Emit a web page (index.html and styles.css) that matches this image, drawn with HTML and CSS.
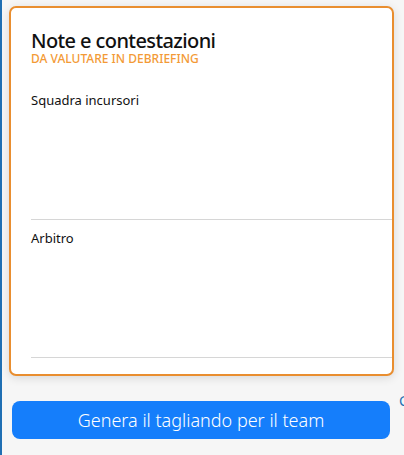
FILE: index.html
```html
<!DOCTYPE html>
<html lang="it">
<head>
    <meta charset="UTF-8">
    <meta name="viewport" content="width=device-width, initial-scale=1.0">
    <title>Note e contestazioni</title>
    <link rel="stylesheet" href="styles.css">
</head>
<body>
    <div class="page">
        <div class="notes-card">
            <div class="card-header">
                <h1>Note e contestazioni</h1>
                <p class="subtitle">DA VALUTARE IN DEBRIEFING</p>
            </div>
            <div class="note-field">
                <label for="noteTeam">Squadra incursori</label>
                <textarea id="noteTeam"></textarea>
            </div>
            <div class="note-field">
                <label for="noteRef">Arbitro</label>
                <textarea id="noteRef"></textarea>
            </div>
        </div>

        <div class="actions">
            <button class="btn-primary">Genera il tagliando per il team</button>
            <span class="side-link">C</span>
        </div>
    </div>
</body>
</html>
```

FILE: styles.css
```css
html, body {
    margin: 0;
    height: 100%;
}

body {
    font-family: "Noto Sans", Arial, sans-serif;
    background-color: #f6f6f6;
    border-left: 2px solid #1f6fb3;
    box-sizing: border-box;
    overflow: hidden;
    color: #111;
}

.page {
    padding: 6px 0 0 7px;
}

.notes-card {
    width: 385px;
    height: 370px;
    box-sizing: border-box;
    background: white;
    border: 2px solid #e98e2f;
    border-radius: 7px;
    box-shadow: 0 2px 10px rgba(0, 0, 0, 0.12);
    padding: 21px 0 0 20px;
    display: flex;
    flex-direction: column;
}

.card-header {
    margin-bottom: 17px;
}

.card-header h1 {
    margin: 0;
    font-size: 20px;
    line-height: 24px;
    font-weight: 500;
    letter-spacing: -0.6px;
}

.subtitle {
    margin: 0;
    font-size: 12px;
    line-height: 12px;
    font-weight: 500;
    color: #f39a36;
}

.note-field {
    height: 138px;
    flex: none;
    box-sizing: border-box;
    padding-top: 9px;
    border-bottom: 1px solid #d6d6d6;
    display: flex;
    flex-direction: column;
}

.note-field label {
    font-size: 13px;
    line-height: 18px;
}

.note-field textarea {
    flex: 1;
    border: none;
    resize: none;
    background: transparent;
    outline: none;
    font-family: inherit;
}

.actions {
    display: flex;
    margin-top: 25px;
}

.btn-primary {
    flex: none;
    margin-left: 3px;
    width: 378px;
    height: 38px;
    border: none;
    border-radius: 8px;
    background-color: #157efb;
    color: white;
    font-family: inherit;
    font-size: 18px;
    font-weight: 300;
}

.side-link {
    margin: -10px 0 0 9px;
    color: #1f6fb3;
    font-size: 14px;
}
```
